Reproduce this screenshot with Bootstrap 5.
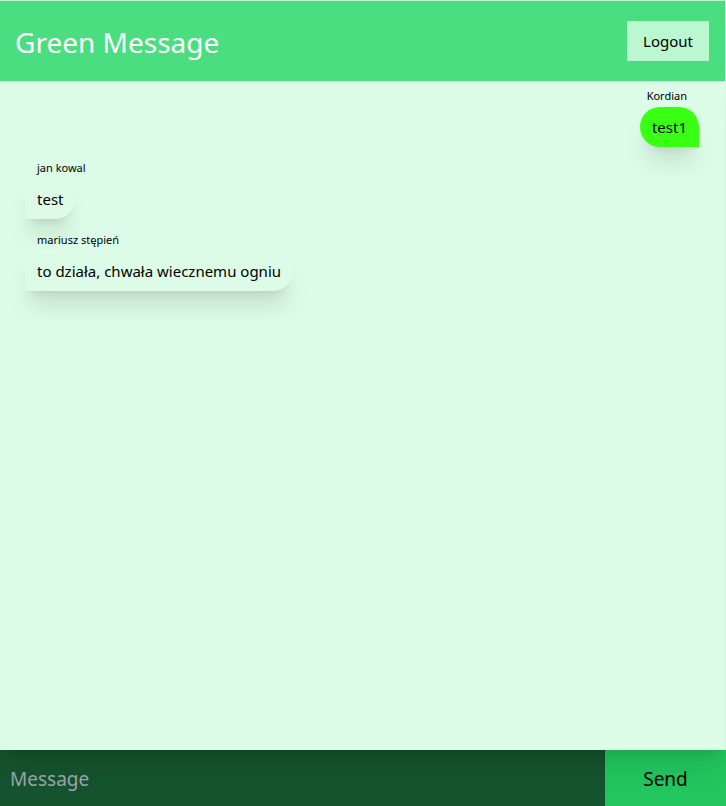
<!DOCTYPE html>
<html lang="pl">
<head>
<meta charset="utf-8">
<meta name="viewport" content="width=device-width, initial-scale=1">
<title>Green Message</title>
<link href="https://cdn.jsdelivr.net/npm/bootstrap@5.3.0/dist/css/bootstrap.min.css" rel="stylesheet">
<style>
body { font-family: "Noto Sans", "Open Sans", sans-serif; font-size: 15px; line-height: 24px; color: #000; background: #dcfce7; border-top: 1px solid #bbf7d0; }
.app-head { min-height: 80px; padding: 0 16px 0 15px; margin-right: 1px; background: #4ade80; }
.app-title { font-size: 28px; line-height: 36px; padding-top: 2px; color: #fff; }
.btn-logout { padding: 8px 16px; line-height: 24px; font-size: 15px; background: #bbf7d0; color: #000; }
.chat { background: #dcfce7; padding: 7px 26px 0 25px; box-shadow: 0 20px 25px -5px rgba(0,0,0,.1), 0 8px 10px -6px rgba(0,0,0,.1); z-index: 1; margin-right: 1px; }
.msg { margin-bottom: 13px; }
.sender { font-size: 11px; line-height: 16px; margin: 0 12px 3px; }
.bubble { padding: 8px 12px; background: #dcfce7; box-shadow: 0 20px 25px -5px rgba(0,0,0,.1), 0 8px 10px -6px rgba(0,0,0,.1); }
.theirs .bubble { border-radius: 0 20px 20px 0; }
.mine .bubble { background: #39ff14; border-radius: 20px 20px 0 20px; }
.composer { min-height: 56px; }
.composer-input, .composer-input:focus { background: #14532d; color: #fff; font-size: 19px; line-height: 28px; padding: 15px 10px 13px; box-shadow: none; }
.composer-input::placeholder { color: #9ca3af; opacity: 1; }
.btn-send { width: 121px; background: #22c55e; color: #000; font-size: 19px; line-height: 28px; padding: 15px 12px 13px; }
</style>
</head>
<body class="d-flex flex-column vh-100">
<header class="app-head d-flex align-items-center justify-content-between">
  <h1 class="app-title fw-normal mb-0">Green Message</h1>
  <button type="button" class="btn btn-logout rounded-0 border-0">Logout</button>
</header>
<main class="chat position-relative d-flex flex-column flex-grow-1">
  <div class="msg mine d-flex flex-column align-items-end">
    <p class="sender">Kordian</p>
    <div class="bubble">test1</div>
  </div>
  <div class="msg theirs d-flex flex-column align-items-start">
    <p class="sender">jan kowal</p>
    <div class="bubble">test</div>
  </div>
  <div class="msg theirs d-flex flex-column align-items-start">
    <p class="sender">mariusz stępień</p>
    <div class="bubble">to działa, chwała wiecznemu ogniu</div>
  </div>
</main>
<form class="composer d-flex">
  <input type="text" class="composer-input form-control rounded-0 border-0 flex-grow-1 w-auto" placeholder="Message" aria-label="Message">
  <button type="submit" class="btn btn-send rounded-0 border-0 flex-shrink-0">Send</button>
</form>
<script src="https://cdn.jsdelivr.net/npm/bootstrap@5.3.0/dist/js/bootstrap.bundle.min.js"></script>
</body>
</html>
